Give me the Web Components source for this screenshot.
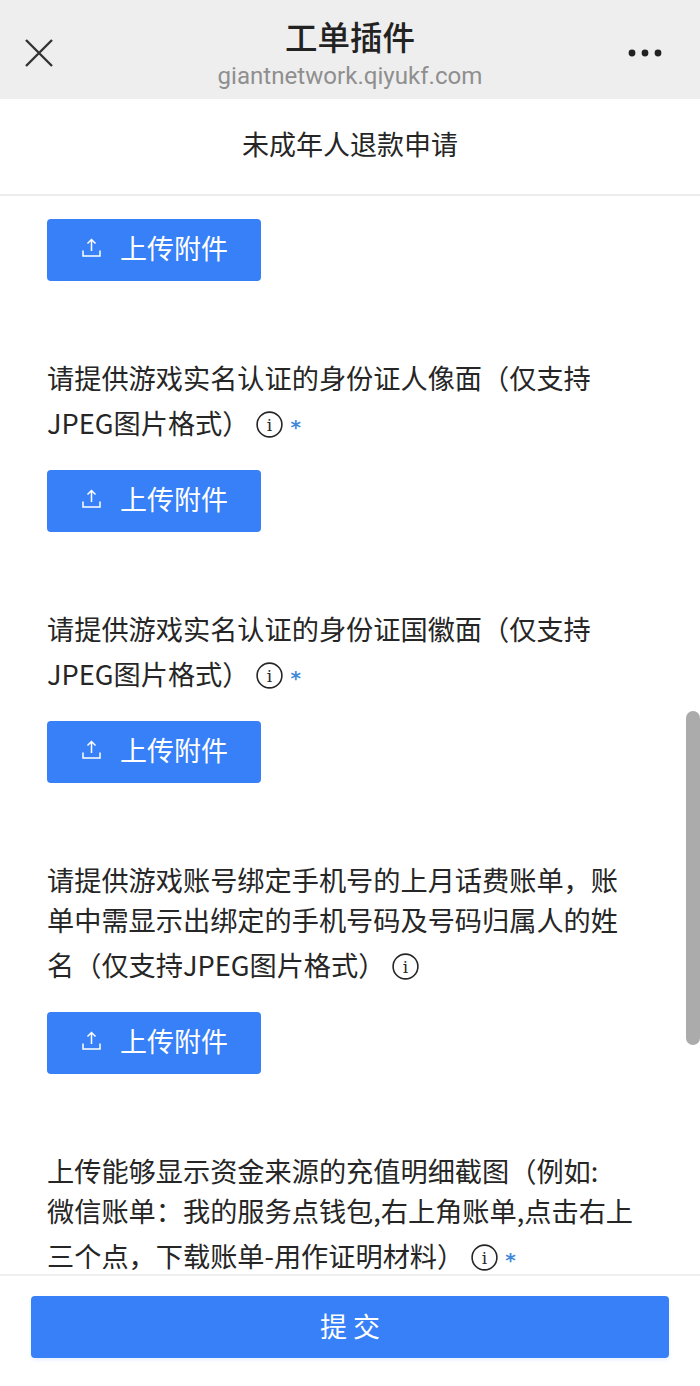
<!DOCTYPE html>
<html lang="zh">
<head>
<meta charset="utf-8">
<title>工单插件</title>
<style>
  html, body { margin: 0; height: 100%; background: #fff; }
  body { font-family: "Noto Sans CJK SC", "Noto Sans", sans-serif; color: #262626; }
</style>
</head>
<body>
<ticket-app>
  <top-bar slot="top" title-text="工单插件" host-text="giantnetwork.qiyukf.com"></top-bar>
  <page-title slot="top">未成年人退款申请</page-title>

  <upload-field bare></upload-field>
  <upload-field required>请提供游戏实名认证的身份证人像面（仅支持JPEG图片格式）</upload-field>
  <upload-field required>请提供游戏实名认证的身份证国徽面（仅支持JPEG图片格式）</upload-field>
  <upload-field>请提供游戏账号绑定手机号的上月话费账单，账单中需显示出绑定的手机号码及号码归属人的姓名（仅支持JPEG图片格式）</upload-field>
  <upload-field required>上传能够显示资金来源的充值明细截图（例如:<br>微信账单：我的服务点钱包,右上角账单,点击右上三个点，下载账单-用作证明材料）</upload-field>

  <submit-bar slot="bottom">提 交</submit-bar>
</ticket-app>

<script>
// top-bar
const topBarTpl = document.createElement('template');
topBarTpl.innerHTML = `
  <style>
    :host {
      display: grid;
      grid-template-columns: 78px 1fr 78px;
      align-items: center;
      height: 99px;
      background: #eeeeee;
    }
    .close { justify-self: start; margin: 6px 0 0 25px; display: block; }
    .more { justify-self: end; margin: 6px 38px 0 0; display: block; }
    .mid { text-align: center; align-self: start; padding-top: 14px; }
    .title {
      font-size: 32.5px;
      font-weight: 500;
      line-height: 44px;
      color: #222;
    }
    .host {
      font-family: Roboto, "Noto Sans", sans-serif;
      font-size: 24.1px;
      line-height: 30px;
      color: #8f8f8f;
      margin-top: 3px;
    }
  </style>
  <svg class="close" width="28" height="28" viewBox="0 0 28 28" fill="none" stroke="#333" stroke-width="2.4">
    <path d="M1 1 L27 27 M27 1 L1 27"/>
  </svg>
  <div class="mid">
    <div class="title"></div>
    <div class="host"></div>
  </div>
  <svg class="more" width="34" height="8" viewBox="0 0 34 8" fill="#222">
    <circle cx="4" cy="4" r="3.4"/><circle cx="17" cy="4" r="3.4"/><circle cx="30" cy="4" r="3.4"/>
  </svg>
`;
class TopBar extends HTMLElement {
  constructor() {
    super();
    this.attachShadow({ mode: 'open' }).appendChild(topBarTpl.content.cloneNode(true));
    this.shadowRoot.querySelector('.title').textContent = this.getAttribute('title-text');
    this.shadowRoot.querySelector('.host').textContent = this.getAttribute('host-text');
  }
}
customElements.define('top-bar', TopBar);

// page-title
class PageTitle extends HTMLElement {
  constructor() {
    super();
    this.attachShadow({ mode: 'open' }).innerHTML = `
      <style>
        :host {
          display: flex;
          align-items: center;
          justify-content: center;
          height: 97px;
          box-sizing: border-box;
          padding-bottom: 6px;
          background: #fff;
          border-bottom: 2px solid #ececec;
          font-size: 27px;
          color: #262626;
        }
      </style>
      <slot></slot>`;
  }
}
customElements.define('page-title', PageTitle);

// info-icon
class InfoIcon extends HTMLElement {
  constructor() {
    super();
    this.attachShadow({ mode: 'open' }).innerHTML = `
      <style>
        :host { display: inline-block; width: 27px; height: 27px; vertical-align: -4px; margin: 14px 7px 0 7px; }
        svg { display: block; }
        text { font-family: "DejaVu Serif", serif; font-size: 17px; fill: #262626; }
      </style>
      <svg width="27" height="27" viewBox="0 0 27 27">
        <circle cx="13.5" cy="13.5" r="12.4" fill="none" stroke="#262626" stroke-width="1.6"/>
        <text x="13.5" y="19.5" text-anchor="middle">i</text>
      </svg>`;
  }
}
customElements.define('info-icon', InfoIcon);

// upload-button
class UploadButton extends HTMLElement {
  constructor() {
    super();
    this.attachShadow({ mode: 'open' }).innerHTML = `
      <style>
        :host {
          display: flex;
          align-items: center;
          width: 214px;
          height: 62px;
          box-sizing: border-box;
          padding: 0 0 6px 35px;
          gap: 19px;
          background: #3780f8;
          border-radius: 4px;
          color: #fff;
          font-size: 27px;
          cursor: pointer;
        }
        svg { display: block; flex: none; }
      </style>
      <svg width="19" height="19" viewBox="0 0 19 19" fill="none" stroke="#fff" stroke-width="1.5">
        <path d="M9.5 13 V1.5 M5.5 5.5 L9.5 1.5 L13.5 5.5"/>
        <path d="M1 12.5 V18 H18 V12.5"/>
      </svg>
      <span><slot>上传附件</slot></span>`;
  }
}
customElements.define('upload-button', UploadButton);

// upload-field
class UploadField extends HTMLElement {
  constructor() {
    super();
    const bare = this.hasAttribute('bare');
    const star = this.hasAttribute('required') ? '<span class="star">*</span>' : '';
    this.attachShadow({ mode: 'open' }).innerHTML = `
      <style>
        :host { display: block; padding: 0 60px 0 47px; margin-bottom: 76px; }
        .label {
          font-size: 27.2px;
          line-height: 40px;
          color: #262626;
          margin-bottom: 28px;
        }
        .star {
          font-family: "DejaVu Sans", sans-serif;
          font-size: 20px;
          font-weight: bold;
          line-height: 1;
          color: #3f87d8;
        }
      </style>
      ${bare ? '' : `<div class="label"><slot></slot><info-icon></info-icon>${star}</div>`}
      <upload-button></upload-button>`;
  }
}
customElements.define('upload-field', UploadField);

// submit-bar
class SubmitBar extends HTMLElement {
  constructor() {
    super();
    this.attachShadow({ mode: 'open' }).innerHTML = `
      <style>
        :host {
          display: block;
          background: #fff;
          border-top: 2px solid #efefef;
          padding: 20px 31px 28px;
        }
        .btn {
          height: 62px;
          box-sizing: border-box;
          padding-bottom: 3px;
          display: flex;
          align-items: center;
          justify-content: center;
          background: #3780f8;
          border-radius: 4px;
          box-shadow: 0 2px 4px rgba(55,128,248,.12);
          color: #fff;
          font-size: 27px;
          white-space: pre;
        }
      </style>
      <div class="btn"><slot></slot></div>`;
  }
}
customElements.define('submit-bar', SubmitBar);

// ticket-app: page frame, scroll area plus overlay scrollbar
class TicketApp extends HTMLElement {
  constructor() {
    super();
    this.attachShadow({ mode: 'open' }).innerHTML = `
      <style>
        :host {
          display: flex;
          flex-direction: column;
          height: 1386px;
          overflow: hidden;
          position: relative;
        }
        .scroll { flex: 1; min-height: 0; overflow: hidden; padding-top: 23px; }
        .thumb {
          position: absolute;
          right: 0;
          top: 711px;
          width: 14px;
          height: 334px;
          border-radius: 7px;
          background: #ababab;
        }
      </style>
      <slot name="top"></slot>
      <div class="scroll"><slot></slot></div>
      <slot name="bottom"></slot>
      <div class="thumb"></div>`;
  }
}
customElements.define('ticket-app', TicketApp);
</script>
</body>
</html>
